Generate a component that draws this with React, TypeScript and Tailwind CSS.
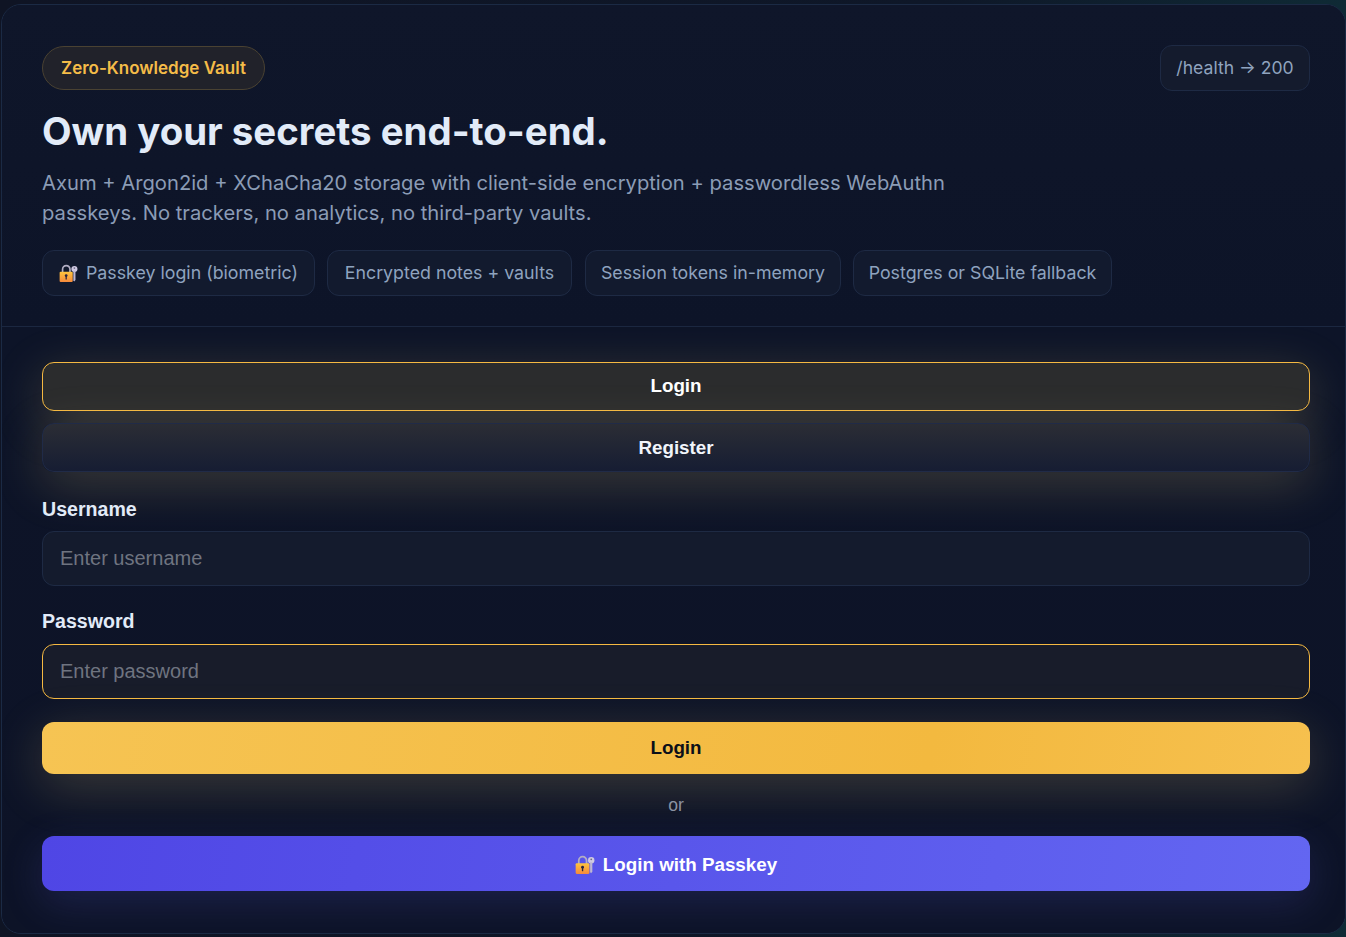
const display = "font-['Inter','Noto_Sans',sans-serif]";

function LockKey({ id, className }: { id: string; className?: string }) {
  return (
    <svg className={className} viewBox="0 0 18 18" fill="none">
      <defs>
        <linearGradient id={id} x1="0" y1="0" x2="0" y2="1">
          <stop offset="0" stopColor="#ffc53d" />
          <stop offset="1" stopColor="#f58a3c" />
        </linearGradient>
      </defs>
      <circle cx="14.6" cy="4.8" r="2.9" fill="#cfc9e2" />
      <path d="M13.6 6.5h2v8.6l-1.1 1.4-.9-1z" fill="#bdb6d2" />
      <circle cx="14.6" cy="3.9" r=".8" fill="#6e6a84" />
      <path d="M3.4 8V5a3.5 3.5 0 0 1 7 0v3" stroke="#b2aec4" strokeWidth="1.6" />
      <rect x="0.6" y="7.4" width="12.4" height="9.6" rx="1" fill={`url(#${id})`} />
      <circle cx="6.8" cy="11" r="1.3" fill="#2b2340" />
      <path d="M6.2 11.4h1.2v3.2h-1.2z" fill="#2b2340" />
    </svg>
  );
}

const chips = [
  { label: "Encrypted notes + vaults", width: "w-[245px] mr-px" },
  { label: "Session tokens in-memory", width: "w-[256px]" },
  { label: "Postgres or SQLite fallback", width: "w-[259px]" },
];

export default function App() {
  return (
    <div className="h-[937px] overflow-hidden bg-[linear-gradient(90deg,#0f1424_0%,#0e1728_70%,#0f2a35_100%)] pt-1 pl-px font-['Liberation_Sans',sans-serif]">
      <div className="h-[930px] w-[1345px] overflow-hidden rounded-[20px] border border-[#1b2a44] bg-[#0d1327]">
        <header className={`relative h-[322px] border-b border-[#1b2740] bg-[linear-gradient(180deg,#0f162a_0%,#0d1428_100%)] pl-10 pr-[35px] pt-[41px] ${display}`}>
          <div className="flex items-start justify-between">
            <span className="flex h-11 w-[223px] items-center justify-center rounded-full border border-[#4a4232] bg-[#21222a] pt-px text-[17px] font-semibold text-[#f5bc48]">
              Zero-Knowledge Vault
            </span>
            <span className="mt-[-1px] flex h-[46px] w-[150px] items-center justify-center rounded-xl border border-[#1e2a44] bg-[#141b2d] pt-px text-[17.6px] text-[#8fa3bf]">
              /health → 200
            </span>
          </div>
          <h1 className="mt-[15px] text-[38.4px] font-bold leading-[50px] text-[#e2ebf8]">
            Own your secrets end-to-end.
          </h1>
          <p className="mt-[12px] w-[940px] text-[20.2px] leading-[30px] text-[#8b9cb6]">
            Axum + Argon2id + XChaCha20 storage with client-side encryption + passwordless WebAuthn passkeys. No trackers, no analytics, no third-party vaults.
          </p>
          <div className="mt-[22px] flex gap-3">
            <span className="flex h-[46px] w-[273px] items-center justify-center gap-2 rounded-xl border border-[#1e2a44] bg-[#121a2e] pt-px text-[17.8px] text-[#8fa3bf]">
              <LockKey id="lockChip" className="h-[19px] w-[19px]" />
              Passkey login (biometric)
            </span>
            {chips.map((chip) => (
              <span
                key={chip.label}
                className={`flex h-[46px] items-center justify-center rounded-xl border border-[#1e2a44] bg-[#121a2e] text-[17.8px] text-[#8fa3bf] ${chip.width}`}
              >
                {chip.label}
              </span>
            ))}
          </div>
        </header>

        <main className="h-[607px] bg-[linear-gradient(180deg,#0d1428_0%,#0d1327_100%)] pl-10 pr-[35px] pt-[35px]">
          <div className="flex flex-col gap-3">
            <button className="h-[49px] rounded-xl border border-[#f5b942] bg-[#2b2c2d] text-[18.8px] font-bold text-white shadow-[0_12px_50px_rgba(232,205,120,0.22)]">
              Login
            </button>
            <button className="h-[49px] rounded-xl border border-[#202b48] bg-[linear-gradient(180deg,#2b2d35_0%,#161d33_100%)] pt-px text-[18.8px] font-bold text-[#f1f5fb] shadow-[0_12px_50px_rgba(232,205,120,0.22)]">
              Register
            </button>
          </div>

          <label className="mt-[26px] block text-[19.6px] font-bold leading-[22px] text-[#e2ebf8]">Username</label>
          <input
            placeholder="Enter username"
            className="mt-[11px] block h-[55px] w-full rounded-xl border border-[#1e2a44] bg-[#141b2d] px-[17px] text-[20px] text-white outline-none placeholder:text-[#6f7480]"
          />

          <label className="mt-[24px] block text-[19.6px] font-bold leading-[22px] text-[#e2ebf8]">Password</label>
          <input
            placeholder="Enter password"
            className="mt-[12px] block h-[55px] w-full rounded-xl border border-[#f5b942] bg-[#181c2a] px-[17px] text-[20px] text-white outline-none placeholder:text-[#6f7480]"
          />

          <button className="mt-[23px] block h-[52px] w-full rounded-xl bg-[linear-gradient(100deg,#f6c453_0%,#f3b93f_70%,#f6c04e_100%)] text-[18.8px] font-bold text-[#0b0f19] shadow-[0_12px_50px_rgba(232,205,120,0.22)]">
            Login
          </button>
          <p className="mt-[21px] text-center text-[17.6px] leading-5 text-[#8a93a3]">or</p>
          <button className="mt-[21px] flex h-[55px] w-full items-center justify-center gap-2 rounded-xl bg-[linear-gradient(100deg,#4f46e5_0%,#6366f1_100%)] pt-[3px] text-[18.8px] font-bold text-white shadow-[0_12px_40px_rgba(99,102,241,0.18)]">
            <LockKey id="lockButton" className="h-5 w-5" />
            Login with Passkey
          </button>
        </main>
      </div>
    </div>
  );
}
